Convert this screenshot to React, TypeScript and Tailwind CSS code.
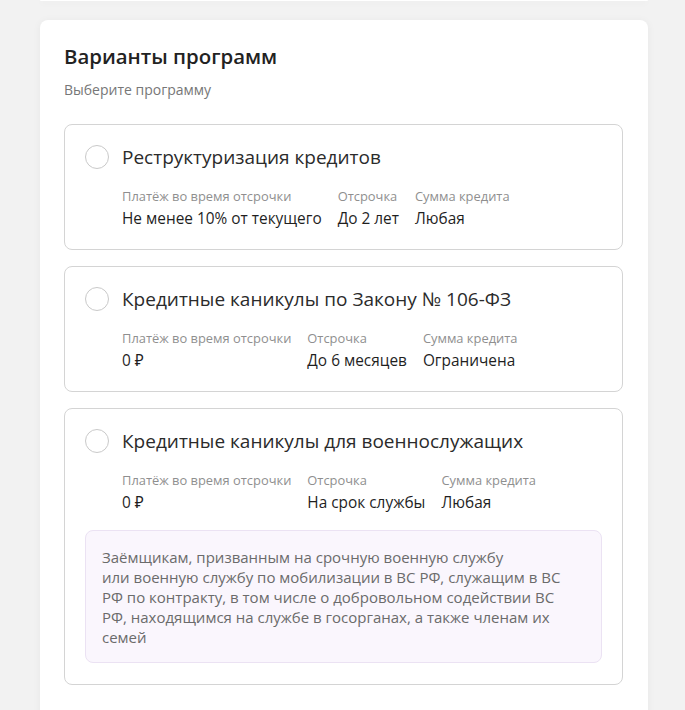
const programs = [
  {
    title: 'Реструктуризация кредитов',
    items: [
      { label: 'Платёж во время отсрочки', value: 'Не менее 10% от текущего' },
      { label: 'Отсрочка', value: 'До 2 лет' },
      { label: 'Сумма кредита', value: 'Любая' },
    ],
  },
  {
    title: 'Кредитные каникулы по Закону № 106-ФЗ',
    items: [
      { label: 'Платёж во время отсрочки', value: '0 ₽' },
      { label: 'Отсрочка', value: 'До 6 месяцев' },
      { label: 'Сумма кредита', value: 'Ограничена' },
    ],
  },
  {
    title: 'Кредитные каникулы для военнослужащих',
    items: [
      { label: 'Платёж во время отсрочки', value: '0 ₽' },
      { label: 'Отсрочка', value: 'На срок службы' },
      { label: 'Сумма кредита', value: 'Любая' },
    ],
    note: [
      'Заёмщикам, призванным на срочную военную службу',
      'или военную службу по мобилизации в ВС РФ, служащим в ВС',
      'РФ по контракту, в том числе о добровольном содействии ВС',
      'РФ, находящимся на службе в госорганах, а также членам их',
      'семей',
    ],
  },
];

export default function App() {
  return (
    <div
      className="min-h-screen bg-[#f2f2f2] pl-10 pr-[37px]"
      style={{ fontFamily: '"Open Sans", "Noto Sans", sans-serif' }}
    >
      <div className="h-[1px] rounded-b-lg bg-white shadow-[0_2px_6px_rgba(0,0,0,0.08)]" />

      <div className="mt-[19px] rounded-lg bg-white pb-10 pl-6 pr-[25px] pt-[22px] shadow-[0_1px_8px_rgba(0,0,0,0.05)]">
        <h2 className="text-[20.4px] font-semibold leading-7 text-[#222]">Варианты программ</h2>
        <p className="mt-[10px] text-[14px] leading-5 text-[#777]">Выберите программу</p>

        <div className="mt-6 flex flex-col gap-4">
          {programs.map((p) => (
            <div key={p.title} className="rounded-lg border border-[#d4d4d4] px-5 pb-5 pt-5">
              <div className="flex items-center gap-[13px]">
                <span className="h-6 w-6 flex-shrink-0 rounded-full border-[1.5px] border-[#c9c9c9] bg-white" />
                <span className="text-[19px] leading-6 text-[#2b2b2b]">{p.title}</span>
              </div>
              <div className="ml-[37px] mt-[18px] flex gap-4">
                {p.items.map((it) => (
                  <div key={it.label}>
                    <div className="text-[12.9px] leading-[18px] text-[#8f8f8f]">{it.label}</div>
                    <div className="mt-1 text-[15.4px] leading-5 text-[#1f1f1f]">{it.value}</div>
                  </div>
                ))}
              </div>
              {p.note && (
                <div className="mb-px mt-[17px] rounded-lg border border-[#ebe2f3] bg-[#faf6fd] px-4 pb-[15px] pt-[16px] text-[15px] leading-5 text-[#6b6b6b]">
                  {p.note.map((line) => (
                    <div key={line} className="whitespace-nowrap">
                      {line}
                    </div>
                  ))}
                </div>
              )}
            </div>
          ))}
        </div>
      </div>
    </div>
  );
}
